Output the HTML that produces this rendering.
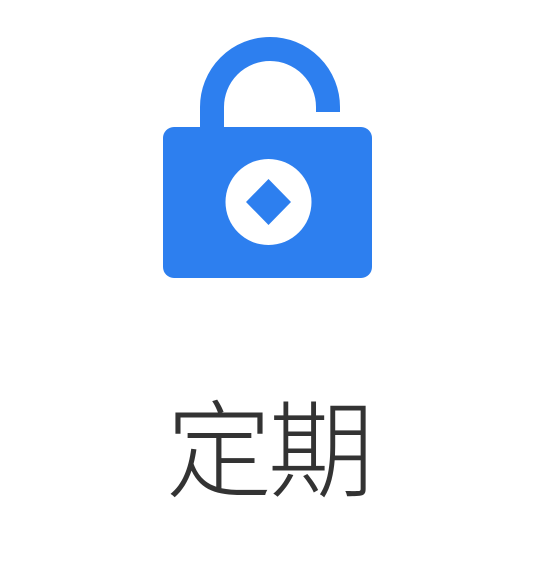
<!DOCTYPE html>
<html><head><meta charset="utf-8"><style>
html,body{margin:0;padding:0;background:#fff;width:540px;height:564px;overflow:hidden;position:relative}
.t{position:absolute;left:0;width:536px;top:399px;text-align:center;font-family:"Liberation Sans","Noto Sans CJK SC",sans-serif;font-size:106px;line-height:108px;color:#333;font-weight:300;letter-spacing:-4px}
</style></head><body>
<svg width="540" height="564" style="position:absolute;left:0;top:0">
<path d="M212 130 V107 A58 58 0 0 1 328 107 V112" fill="none" stroke="#2d7fef" stroke-width="24"/>
<rect x="163" y="127" width="209" height="151" rx="11" fill="#2d7fef"/>
<circle cx="268.5" cy="202" r="43" fill="#fff"/>
<path d="M268.5 179 L291 202 L268.5 225 L246 202 Z" fill="#2d7fef"/>
</svg>
<div class="t">定期</div>
</body></html>
